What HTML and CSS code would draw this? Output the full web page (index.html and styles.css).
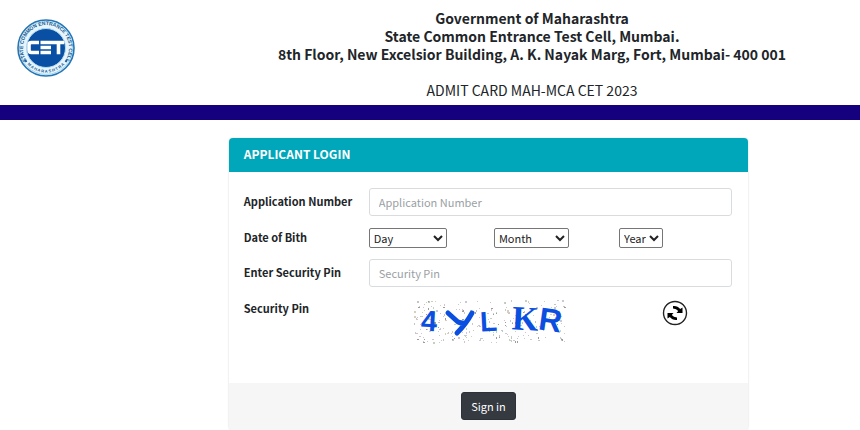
FILE: index.html
```html
<!DOCTYPE html>
<html lang="en">
<head>
<meta charset="utf-8">
<title>Applicant Login</title>
<link rel="stylesheet" href="styles.css">
</head>
<body>
<header class="site-header">
  <svg class="logo" viewBox="0 0 60 60" role="img" aria-label="State Common Entrance Test Cell">
    <defs>
      <path id="ring-top" d="M12.5 45 A23 23 0 1 1 47.5 45"/>
      <path id="ring-bottom" d="M12 47 A25 25 0 0 0 48 47"/>
    </defs>
    <circle cx="30" cy="30" r="28" fill="#e6f5fc" stroke="#2475b5" stroke-width="1.600"/>
    <circle cx="30" cy="30" r="26.400" fill="none" stroke="#8cc9ea" stroke-width="0.700"/>
    <circle cx="30" cy="30" r="19.500" fill="#0950a4" stroke="#b3dcf2" stroke-width="1"/>
    <text class="ring-text"><textPath href="#ring-top" startOffset="50%" text-anchor="middle">STATE COMMON ENTRANCE TEST CELL</textPath></text>
    <text class="ring-text ring-small"><textPath href="#ring-bottom" startOffset="50%" text-anchor="middle">M A H A R A S H T R A</textPath></text>
    <path d="M9 42l1.500 2M51 42l-1.500 2" stroke="#1d5d9c" stroke-width="2"/>
    <g fill="none" stroke="#fff" stroke-width="3.600">
      <path d="M23 24.500H15.500Q13 24.500 13 27V32Q13 34.500 15.500 34.500H23"/>
      <path d="M24.500 24.500H35M24.500 29.500H35M24.500 34.500H35"/>
      <path d="M35 24.500H48M42.500 24.500V36.300"/>
    </g>
  </svg>
  <div class="heading">
    <h1>Government of Maharashtra<br>State Common Entrance Test Cell, Mumbai.<br>8th Floor, New Excelsior Building, A. K. Nayak Marg, Fort, Mumbai- 400 001</h1>
    <p>ADMIT CARD MAH-MCA CET 2023</p>
  </div>
</header>
<div class="band"></div>
<main>
  <form class="card">
    <h2 class="card-header">APPLICANT LOGIN</h2>
    <div class="card-body">
      <label for="appno">Application Number</label>
      <input class="field" id="appno" type="text" placeholder="Application Number">
      <label for="day">Date of Bith</label>
      <div class="dates">
        <select id="day" class="day"><option>Day</option></select>
        <select class="month" aria-label="Month"><option>Month</option></select>
        <select class="year" aria-label="Year"><option>Year</option></select>
      </div>
      <label for="pin">Enter Security Pin</label>
      <input class="field" id="pin" type="text" placeholder="Security Pin">
      <span class="label">Security Pin</span>
      <div class="captcha-row">
        <svg class="captcha" viewBox="0 0 152 44" role="img" aria-label="Security pin">
          <g id="noise"></g>
          <g class="captcha-text">
            <text x="7" y="31" class="sans" font-size="29" transform="rotate(3 15 22)">4</text>
            <text x="66" y="31" class="sans" font-size="28" transform="rotate(-3 74 20)">L</text>
            <text x="98" y="30" class="serif" font-size="34" transform="rotate(3 110 20)">K</text>
            <text x="125" y="31" class="sans" font-size="32" transform="rotate(8 136 20)">R</text>
          </g>
          <path d="M34 13L44 22Q46 23 49 23M58 13Q52 24 43 33" fill="none" stroke="#0b4fe0" stroke-width="5" stroke-linecap="round"/>
        </svg>
        <button class="refresh" type="button" aria-label="Refresh security pin">
          <svg viewBox="0 0 26 26">
            <circle cx="13" cy="13" r="11.500" fill="#fff" stroke="#222" stroke-width="1.400"/>
            <path d="M11 6Q15.500 5.500 18.200 9L20.500 7.500V13H14.500L16.200 11Q14.500 8.800 11 8.500Z"/>
            <path d="M15 20Q10.500 20.500 7.800 17L5.500 18.500V13H11.500L9.800 15Q11.500 17.200 15 17.500Z"/>
          </svg>
        </button>
      </div>
    </div>
    <div class="card-footer"><button class="submit" type="submit">Sign in</button></div>
  </form>
</main>
<script src="noise.js"></script>
</body>
</html>
```
FILE: styles.css
```css
* {
  box-sizing: border-box;
}

body {
  margin: 0;
  background: #fff;
  color: #212529;
  font-family: "Noto Sans CJK SC", "Noto Sans", sans-serif;
  font-size: 11px;
  line-height: 16px;
}

.site-header {
  display: grid;
  grid-template-columns: 204px 1fr;
  padding: 9px 0 6px;
}

.logo {
  width: 60px;
  height: 60px;
  margin: 9px 0 0 16px;
}

.ring-text {
  fill: #14558f;
  font-family: "Liberation Sans", sans-serif;
  font-size: 5px;
  font-weight: bold;
}

.ring-small {
  font-size: 4px;
}

.heading {
  text-align: center;
}

.heading h1,
.heading p {
  margin: 0;
  font-size: 14px;
  line-height: 18px;
}

.heading p {
  margin-top: 18px;
}

.band {
  height: 15px;
  background: #15007e;
}

main {
  padding: 18px 13% 0 26.6%;
}

.card {
  border-radius: 4px;
  box-shadow: 0 0 2px #0003;
  overflow: hidden;
}

.card-header {
  margin: 0;
  padding: 7px 15px 9px;
  background: #00a7bb;
  color: #fff;
  font-size: 12px;
  line-height: 18px;
}

.card-body {
  display: grid;
  grid-template-columns: 110px 1fr;
  grid-template-rows: 28px 27px 28px 73px;
  gap: 8px 15px;
  padding: 16px 16px 15px 15px;
}

label,
.label {
  font-weight: bold;
  line-height: 27px;
  white-space: nowrap;
}

.field {
  width: 100%;
  height: 28px;
  padding: 0 9px;
  border: 1px solid #d9dcdf;
  border-radius: 3px;
  background: #fff;
  color: #495057;
  font: inherit;
}

.field::placeholder {
  color: #9a9fa4;
  opacity: 1;
}

.dates {
  display: grid;
  grid-template-columns: repeat(3, 1fr);
  column-gap: 12px;
  align-items: center;
}

select {
  height: 20px;
  padding: 0;
  border: 1px solid #767676;
  border-radius: 2px;
  background: #fff;
  color: #222;
  font: inherit;
}

.day {
  width: 78px;
}

.month {
  width: 75px;
}

.year {
  width: 44px;
}

.captcha-row {
  display: flex;
  align-items: flex-start;
  justify-content: space-between;
  padding: 5px 44px 0 45px;
}

.captcha {
  width: 152px;
  height: 44px;
}

.captcha-text {
  fill: #0b4fe0;
  font-weight: bold;
}

.sans {
  font-family: "Liberation Sans", sans-serif;
}

.serif {
  font-family: "Liberation Serif", serif;
}

.refresh {
  width: 26px;
  height: 26px;
  padding: 0;
  border: 0;
  background: none;
}

.refresh svg {
  display: block;
}

.card-footer {
  padding: 9px 0 10px;
  background: #f6f6f6;
  text-align: center;
}

.submit {
  display: block;
  height: 28px;
  margin: 0 auto;
  padding: 0 9px;
  border: 1px solid #2c3237;
  border-radius: 3px;
  background: #343a40;
  color: #fff;
  font: inherit;
}
```
FILE: noise.js
```js
// Speckle behind the security pin, from a fixed seed.
const group = document.getElementById("noise");
const tones = ["#c4c4c4", "#9c9c9c", "#d6c2cc", "#c2d3bd", "#c8c8dc", "#d8cfba"];
let seed = 41;
function next() {
  seed = (seed * 16807) % 2147483647;
  return seed / 2147483647;
}
for (let i = 0; i < 270; i++) {
  const dot = document.createElementNS("http://www.w3.org/2000/svg", "rect");
  dot.setAttribute("x", Math.floor(next() * 151));
  dot.setAttribute("y", Math.floor(next() * 43));
  dot.setAttribute("width", next() > 0.7 ? 2 : 1);
  dot.setAttribute("height", next() > 0.7 ? 2 : 1);
  dot.setAttribute("fill", tones[Math.floor(next() * tones.length)]);
  group.appendChild(dot);
}
```
